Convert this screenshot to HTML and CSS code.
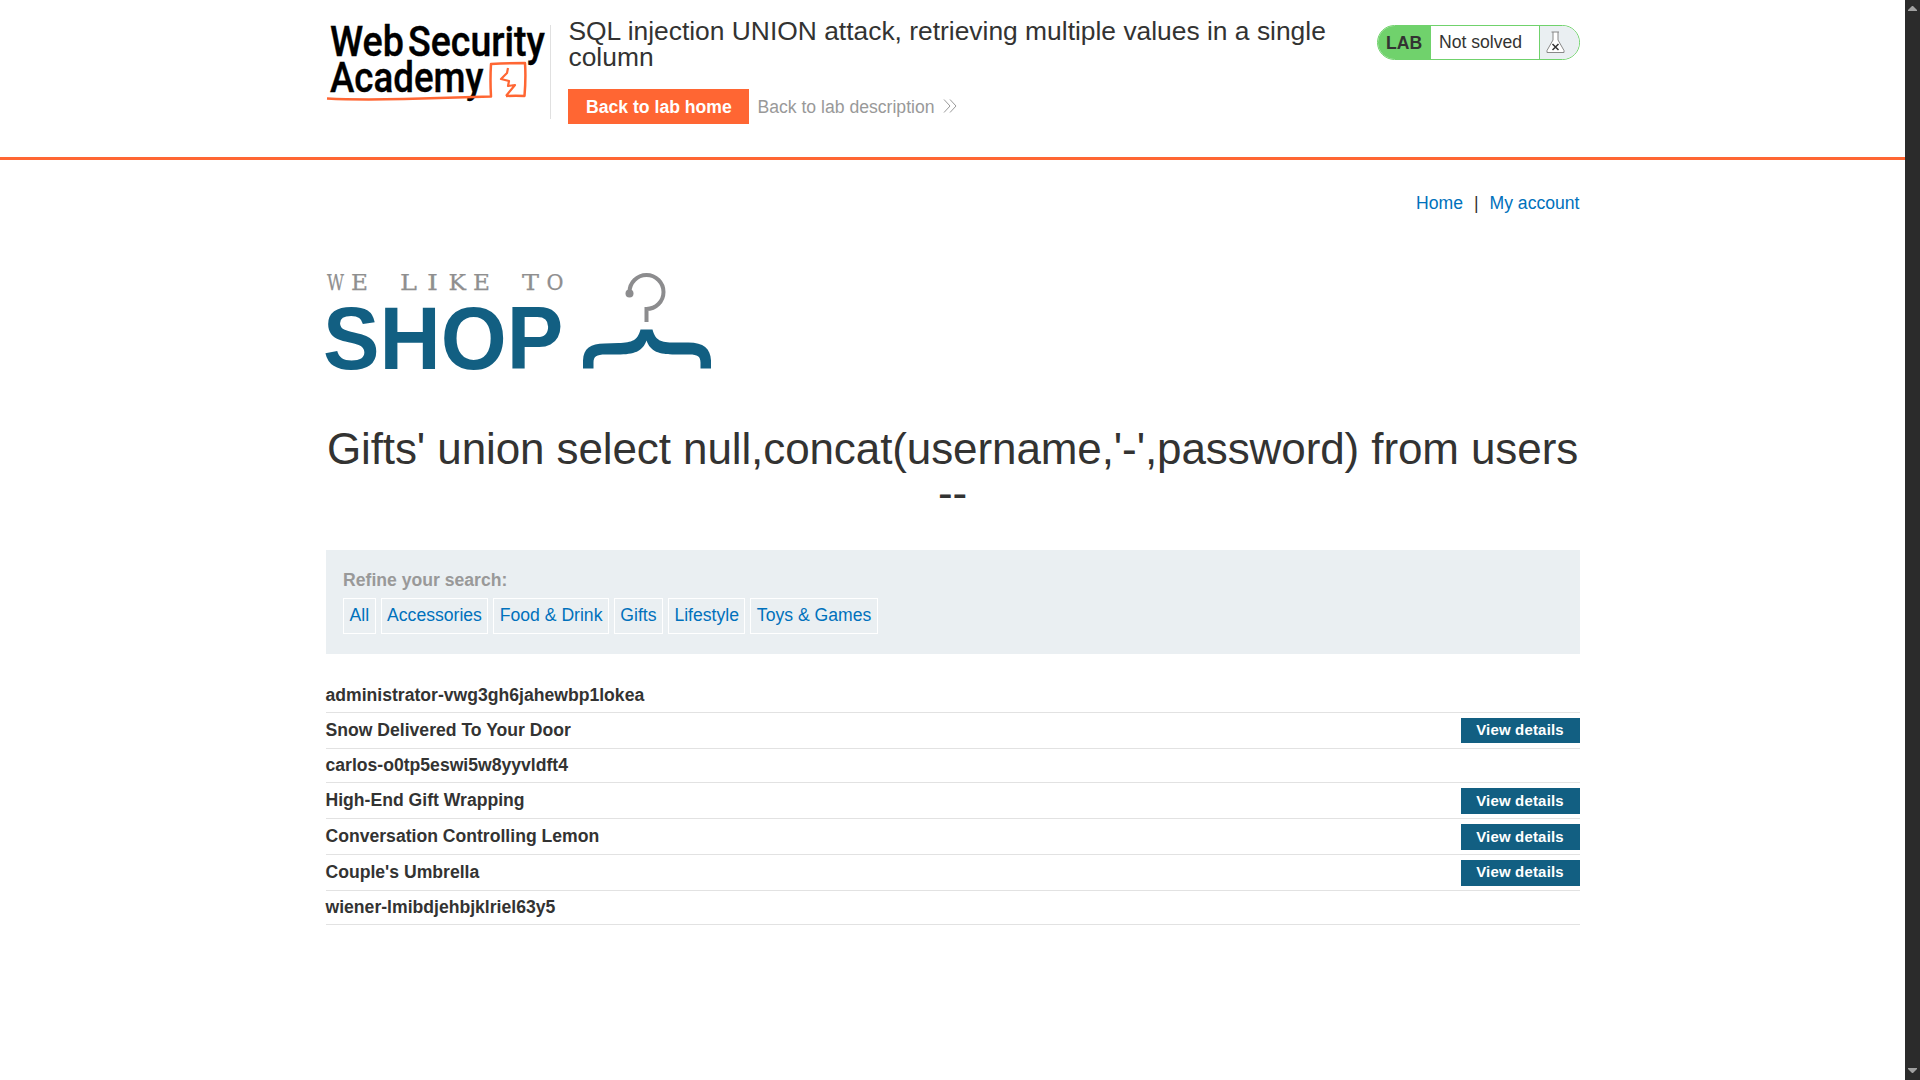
FILE: index.html
```html
<!DOCTYPE html>
<html lang="en">
<head>
<meta charset="utf-8">
<title>SQL injection UNION attack, retrieving multiple values in a single column</title>
<link rel="stylesheet" href="styles.css">
</head>
<body>
<div class="page">
  <header class="lab-header">
    <div class="container header-inner">
      <svg class="academy-logo" width="224" height="94" viewBox="0 0 224 94" role="img" aria-label="Web Security Academy">
        <g class="academy-text">
          <text x="4" y="31" textLength="74" lengthAdjust="spacingAndGlyphs">Web</text>
          <text x="82" y="31" textLength="137" lengthAdjust="spacingAndGlyphs">Security</text>
          <text x="4" y="67" textLength="153.500" lengthAdjust="spacingAndGlyphs">Academy</text>
        </g>
        <path class="academy-line" d="M1 73.500Q30 75 78 74L165 71.500Q164 55 165 39Q182 38 199 38Q200 53 198.500 71Q190 70.500 180 71"/>
        <path class="academy-line thin" d="M182 43L181 48L175 54L183 56L182 61L189 60L180 71"/>
      </svg>
      <div class="title-box">
        <h2>SQL injection UNION attack, retrieving multiple values in a single column</h2>
        <div class="header-links">
          <a class="home-button">Back to lab home</a>
          <a class="description-link">Back to lab description
            <svg width="14" height="14" viewBox="0 0 14 14"><path d="M1 .5L7 7L1 13.5M7 .5L13 7L7 13.5"/></svg>
          </a>
        </div>
      </div>
      <div class="status">
        <span class="status-tag">LAB</span>
        <span class="status-text">Not solved</span>
        <span class="status-icon">
          <svg width="19" height="23" viewBox="0 0 19 23"><path class="flask" d="M5.5 1H13M7 1V9L1 19.5V21.5H18V19.5L12 9V1"/><path class="cross" d="M6.5 13L12.5 19M12.5 13L6.5 19"/></svg>
        </span>
      </div>
    </div>
  </header>
  <main class="container">
    <nav class="top-links"><a>Home</a><span>|</span><a>My account</a></nav>
    <svg class="shop-logo" width="388" height="100" viewBox="0 0 388 100" role="img" aria-label="We like to shop">
      <g class="tagline">
        <text x="1" y="18" textLength="17" lengthAdjust="spacingAndGlyphs">W</text>
        <text x="25" y="18" textLength="17" lengthAdjust="spacingAndGlyphs">E</text>
        <text x="74" y="18" textLength="17" lengthAdjust="spacingAndGlyphs">L</text>
        <text x="101" y="18" textLength="11" lengthAdjust="spacingAndGlyphs">I</text>
        <text x="122.500" y="18" textLength="17.500" lengthAdjust="spacingAndGlyphs">K</text>
        <text x="147" y="18" textLength="17" lengthAdjust="spacingAndGlyphs">E</text>
        <text x="196" y="18" textLength="17" lengthAdjust="spacingAndGlyphs">T</text>
        <text x="220.500" y="18" textLength="17" lengthAdjust="spacingAndGlyphs">O</text>
      </g>
      <text class="shop-word" transform="translate(-3 96.500) scale(.953 1)" x="0" y="0">SHOP</text>
      <path class="hook" d="M303.500 20A17 17 0 1 1 320.500 37V50"/>
      <circle class="hook-end" cx="303.500" cy="21.500" r="4"/>
      <path class="hanger" transform="translate(-.5 -1.500)" d="M315 59H327C330 70 335 72 349 72H363C378 72 385 78 385.500 90V98H375V92C375 86 372 84 364 84H350C333 84 325 81 321 70C317 81 309 84 292 84H280C271 84 268 86 268 92V98H257.500V90C258 78 265 73 279 73L293 72.500C307 72 312 70 315 59Z"/>
    </svg>
    <h1>Gifts' union select null,concat(username,'-',password) from users --</h1>
    <section class="filters">
      <strong>Refine your search:</strong>
      <div class="filter-list"><a>All</a><a>Accessories</a><a>Food &amp; Drink</a><a>Gifts</a><a>Lifestyle</a><a>Toys &amp; Games</a></div>
    </section>
    <div class="results">
      <div class="row first"><span>administrator-vwg3gh6jahewbp1lokea</span></div>
      <div class="row product"><span>Snow Delivered To Your Door</span><a class="details short">View details</a></div>
      <div class="row"><span>carlos-o0tp5eswi5w8yyvldft4</span></div>
      <div class="row product"><span>High-End Gift Wrapping</span><a class="details">View details</a></div>
      <div class="row product"><span>Conversation Controlling Lemon</span><a class="details">View details</a></div>
      <div class="row product"><span>Couple's Umbrella</span><a class="details raised">View details</a></div>
      <div class="row"><span>wiener-lmibdjehbjklriel63y5</span></div>
    </div>
  </main>
</div>
<div class="scrollbar">
  <svg width="9" height="5" viewBox="0 0 9 5"><path d="M0 5V4L4 0H5L9 4V5Z"/></svg>
  <svg width="9" height="5" viewBox="0 0 9 5"><path d="M0 0V1L4 5H5L9 1V0Z"/></svg>
</div>
</body>
</html>
```
FILE: styles.css
```css
* { box-sizing: border-box; }
body {
  margin: 0;
  height: 1080px;
  display: flex;
  overflow: hidden;
  background: #fff;
  color: #333332;
  font: 17.6px/20px "Liberation Sans", Arial, sans-serif;
}
.page { width: 1905px; }
.container { width: 1254px; margin: 0 auto; }
.lab-header { height: 160px; border-bottom: 3px solid #ff6633; }
.header-inner { display: flex; align-items: flex-start; }
.academy-logo { margin-top: 25px; flex: none; overflow: visible; }
.academy-text { font: 500 42px Roboto, sans-serif; fill: #000; stroke: #000; stroke-width: .4; }
.academy-line { fill: none; stroke: #ff6633; stroke-width: 2.5; stroke-linejoin: round; }
.academy-line.thin { stroke-width: 2.2; }
.title-box {
  width: 809px;
  margin-top: 25px;
  height: 94px;
  padding-left: 17.6px;
  border-left: 1px solid #e0e0e0;
}
h2 { margin: -7px 0 0 .4px; font-size: 26.4px; line-height: 26.4px; font-weight: 400; }
.header-links { display: flex; align-items: center; gap: 8.4px; margin-top: 18px; }
.home-button {
  height: 35px;
  width: 181px;
  padding-left: .6px;
  background: #ff6633;
  color: #fff;
  font-weight: 700;
  line-height: 36px;
  text-align: center;
}
.description-link { color: #999; display: flex; gap: 8.5px; align-items: center; padding-top: 2px; }
.description-link svg { fill: none; stroke: #999; stroke-width: 1; margin-top: -3px; }
.status {
  display: flex;
  width: 203px;
  height: 35px;
  margin: 25px 0 0 auto;
  border: 1px solid #70d26c;
  border-radius: 18px;
  overflow: hidden;
  line-height: 33px;
}
.status-tag { width: 53px; padding-left: 8.5px; background: #70d26c; font-weight: 700; line-height: 35px; }
.status-text { width: 109px; padding-left: 8.5px; border-right: 1px solid #70d26c; }
.status-icon { flex: 1; padding: 5px 0 0 6px; background: #eaeff2; line-height: 0; }
.flask { fill: #fff; stroke: #888; stroke-width: 1; }
.cross { stroke: #333; stroke-width: 1.5; }
.top-links { display: flex; justify-content: flex-end; gap: 11px; padding-top: 33px; }
.top-links a, .filter-list a { color: #0071bc; }
.shop-logo { display: block; margin: 59px 0 55px; overflow: visible; }
.tagline { font: 23px "DejaVu Serif", serif; fill: #8f8f8f; stroke: #8f8f8f; stroke-width: .25; }
.shop-word { font: 700 89px "Liberation Sans", sans-serif; fill: #125f82; }
.hook { fill: none; stroke: #8c8c8e; stroke-width: 4; }
.hook-end { fill: #8c8c8e; }
.hanger { fill: #125f82; }
h1 { margin: 0 0 35px; font-size: 44px; line-height: 44px; font-weight: 400; letter-spacing: -.1px; text-align: center; }
.filters { height: 104px; padding: 20px 17.6px; background: #eaeff2; }
.filters strong { display: block; color: #999; }
.filter-list { display: flex; gap: 4.9px; margin-top: 8px; }
.filter-list a { height: 36px; padding: 0 5.5px; border: 1px solid #fff; line-height: 33px; }
.results { padding-top: 25px; font-weight: 700; }
.row { display: flex; justify-content: space-between; height: 34px; border-bottom: 1px solid #e2e2e2; line-height: 33px; }
.product { height: 36px; line-height: 34px; }
.details {
  width: 119px;
  height: 26px;
  margin-top: 5px;
  background: #125f82;
  color: #fff;
  font-size: 14.96px;
  letter-spacing: .2px;
  line-height: 26px;
  text-align: center;
}
.details.short { height: 25px; line-height: 24px; }
.details.raised { line-height: 24px; }
.scrollbar {
  width: 15px;
  background: #2b2b2b;
  display: flex;
  flex-direction: column;
  justify-content: space-between;
  padding: 6px 3px 7px;
}
.scrollbar svg { fill: #a0a0a0; }
```
